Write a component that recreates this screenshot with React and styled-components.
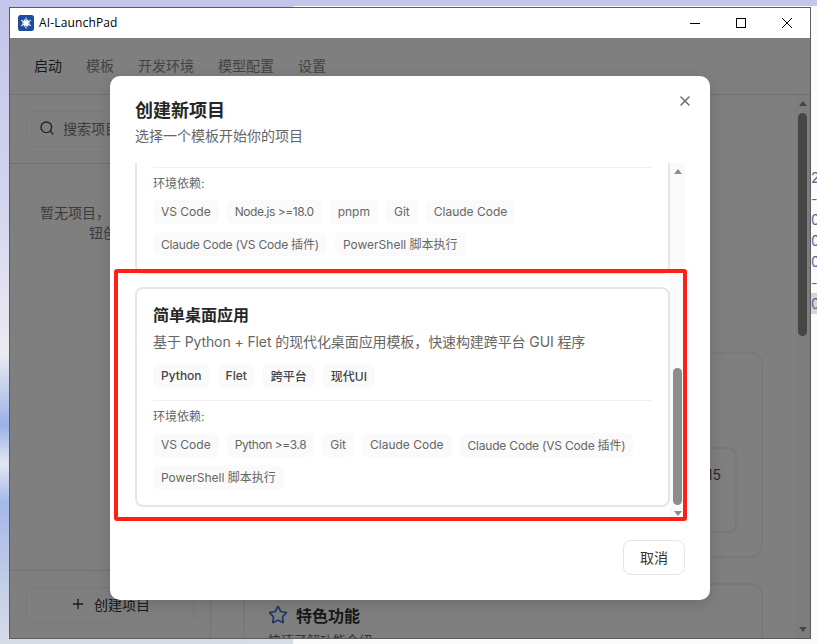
import React from 'react';
import styled, { createGlobalStyle } from 'styled-components';
import { Search, Plus, Star, X } from 'lucide-react';

const GlobalStyle = createGlobalStyle`
  html, body {
    margin: 0;
    height: 100%;
    overflow: hidden;
  }
  body {
    font-family: Inter, "Noto Sans CJK SC", sans-serif;
    color: #333;
  }
  * {
    box-sizing: border-box;
  }
`;

const Desktop = styled.div`
  position: relative;
  width: 817px;
  height: 644px;
  overflow: hidden;
  background: linear-gradient(180deg, #c3c6ea 0, #d2d3ee 30%, #ebebf2 55%, #9ab2e6 66%, #e3e6f2 72%, #a5b9e8 78%, #d8dce6 100%);
`;

const BackWindow = styled.div`
  position: absolute;
  left: 293px;
  top: 5px;
  right: 0;
  bottom: 0;
  padding: 161px 0 0 518px;
  background: #fbfbfb;
  border-top: 1px solid #c9c9c9;
`;

const BackRow = styled.div`
  height: 21px;
  line-height: 21px;
  font-size: 14px;
  color: #4a6a9a;
  white-space: nowrap;
  background: ${({ $active }) => ($active ? '#d4d4d4' : 'transparent')};
`;

const Window = styled.div`
  position: absolute;
  left: 9px;
  top: 7px;
  width: 802px;
  height: 632px;
  display: flex;
  flex-direction: column;
  overflow: hidden;
  background: #fff;
  border: 1px solid #5c5c5c;
`;

const TitleBar = styled.div`
  height: 30px;
  flex: none;
  display: flex;
  align-items: center;
  padding-left: 8px;
  background: #fff;
`;

const TitleText = styled.span`
  margin-left: 5px;
  padding-bottom: 2px;
  font-family: "Open Sans", sans-serif;
  font-size: 12px;
  letter-spacing: 0.15px;
  color: #000;
`;

const WindowControls = styled.div`
  margin-left: auto;
  display: flex;
`;

const ControlButton = styled.div`
  width: 46px;
  height: 30px;
  display: flex;
  align-items: center;
  justify-content: center;
`;

const AppBody = styled.div`
  position: relative;
  flex: 1;
  min-height: 0;
  display: flex;
  flex-direction: column;
`;

const Nav = styled.nav`
  height: 57px;
  flex: none;
  display: flex;
  align-items: center;
  gap: 24px;
  padding: 0 24px 2px;
  border-bottom: 1px solid #e5e5e5;
`;

const NavItem = styled.span`
  font-size: 14px;
  color: ${({ $active }) => ($active ? '#333' : '#888')};
`;

const Content = styled.div`
  flex: 1;
  min-height: 0;
  display: flex;
`;

const Sidebar = styled.aside`
  width: 201px;
  flex: none;
  display: flex;
  flex-direction: column;
  border-right: 1px solid #ebebeb;
`;

const SearchSection = styled.div`
  padding: 16px;
  border-bottom: 1px solid #e5e5e5;
`;

const SearchBox = styled.div`
  height: 36px;
  display: flex;
  align-items: center;
  gap: 8px;
  padding: 0 12px 2px;
  font-size: 14px;
  color: #777;
  border: 1px solid #f5f5f5;
  border-radius: 8px;
`;

const EmptyText = styled.p`
  flex: 1;
  margin: 0;
  padding: 39px 24px 0;
  font-size: 14px;
  line-height: 20px;
  text-align: center;
  color: #777;
`;

const SidebarFooter = styled.div`
  padding: 16px 16px 15px;
  border-top: 1px solid #e5e5e5;
`;

const CreateButton = styled.div`
  height: 36px;
  display: flex;
  align-items: center;
  justify-content: center;
  gap: 8px;
  padding-bottom: 2px;
  font-size: 14px;
  color: #333;
  border: 1px solid #f2f2f2;
  border-radius: 8px;
`;

const Main = styled.main`
  flex: 1;
  min-width: 0;
  display: flex;
  flex-direction: column;
  gap: 25px;
  padding: 257px 32px 0;
  overflow: hidden;
`;

const PanelCard = styled.section`
  flex: none;
  padding: 93px 24px 23px;
  border: 2px solid #f2f2f2;
  border-radius: 12px;
`;

const InfoBox = styled.div`
  height: 86px;
  display: flex;
  align-items: flex-start;
  justify-content: flex-end;
  padding: 17px 14px 0 0;
  font-size: 14px;
  color: #555;
  border: 2px solid #f2f2f2;
  border-radius: 8px;
`;

const FeatureCard = styled.section`
  flex: none;
  padding: 18px 23px;
  border: 2px solid #f2f2f2;
  border-radius: 12px;
`;

const FeatureHead = styled.div`
  display: flex;
  align-items: center;
  gap: 8px;
  height: 24px;
  font-size: 16px;
  font-weight: 600;
  color: #333;
`;

const FeatureDesc = styled.p`
  margin: 3px 0 0;
  font-size: 13px;
  color: #666;
`;

const ScrollTrack = styled.div`
  width: 15px;
  flex: none;
  display: flex;
  flex-direction: column;
  align-items: center;
  padding: ${({ $pad }) => $pad};
  background: #fafafa;
`;

const ArrowUp = styled.div`
  width: 0;
  height: 0;
  border-left: 4.5px solid transparent;
  border-right: 4.5px solid transparent;
  border-bottom: 5px solid #8c8c8c;
`;

const ArrowDown = styled(ArrowUp)`
  border-bottom: 0;
  border-top: 5px solid #8c8c8c;
`;

const Thumb = styled.div`
  width: 9px;
  height: ${({ $height }) => $height}px;
  margin: ${({ $end }) => ($end ? 'auto 0 6px' : '7px 0 auto')};
  background: #8c8c8c;
  border-radius: 5px;
`;

const Overlay = styled.div`
  position: absolute;
  inset: 0;
  display: flex;
  align-items: center;
  justify-content: center;
  background: rgba(0, 0, 0, 0.5);
`;

const Modal = styled.div`
  position: relative;
  width: 600px;
  height: 524px;
  display: flex;
  flex-direction: column;
  padding: 0 25px;
  background: #fff;
  border-radius: 10px;
  box-shadow: 0 4px 16px rgba(0, 0, 0, 0.15);
`;

const ModalHeader = styled.header`
  height: 87px;
  flex: none;
  padding-top: 24px;
`;

const ModalTitle = styled.h2`
  margin: 0;
  font-size: 18px;
  line-height: 22px;
  font-weight: 700;
  color: #262626;
`;

const ModalSubtitle = styled.p`
  margin: 4px 0 0;
  font-size: 14px;
  line-height: 20px;
  color: #666;
`;

const CloseButton = styled.div`
  position: absolute;
  top: 17px;
  right: 17px;
  display: flex;
  color: #666;
`;

const ListArea = styled.div`
  height: 357px;
  flex: none;
  display: flex;
`;

const TemplateList = styled.div`
  flex: 1;
  min-width: 0;
  display: flex;
  flex-direction: column;
  justify-content: flex-end;
  gap: 13px;
  padding-bottom: 13px;
  overflow: hidden;
`;

const TemplateCard = styled.article`
  flex: none;
  padding: 16px;
  border: 2px solid #e5e5e5;
  border-radius: 8px;
`;

const CardTitle = styled.h3`
  margin: 0;
  font-size: 16px;
  line-height: 20px;
  font-weight: 700;
  color: #262626;
`;

const CardDesc = styled.p`
  margin: 8px 0 13px;
  font-size: 14px;
  line-height: 18px;
  letter-spacing: -0.1px;
  color: #666;
`;

const ChipRow = styled.div`
  display: flex;
  flex-wrap: wrap;
  gap: 8px;
`;

const Chip = styled.span`
  height: 24px;
  display: inline-flex;
  align-items: center;
  padding: 0 8px 2px;
  font-size: 12px;
  font-weight: ${({ $strong }) => ($strong ? 500 : 400)};
  letter-spacing: ${({ $spacing }) => $spacing || 0}px;
  color: ${({ $strong }) => ($strong ? '#444' : '#666')};
  background: #fafafa;
  border-radius: 6px;
`;

const DepsSection = styled.div`
  margin-top: ${({ $flush }) => ($flush ? '0' : '12px')};
  padding-top: 8px;
  border-top: 1px solid #f0f0f0;
`;

const DepsLabel = styled.div`
  margin-bottom: 9px;
  font-size: 12px;
  line-height: 15px;
  color: #666;
`;

const ModalFooter = styled.footer`
  display: flex;
  justify-content: flex-end;
  padding-top: 20px;
`;

const CancelButton = styled.div`
  width: 62px;
  height: 35px;
  display: flex;
  align-items: center;
  justify-content: center;
  padding-bottom: 2px;
  font-size: 14px;
  color: #333;
  background: #fff;
  border: 1px solid #e5e5e5;
  border-radius: 8px;
`;

const Highlight = styled.div`
  position: absolute;
  left: 114px;
  top: 269px;
  width: 573px;
  height: 252px;
  border: 4px solid #ff2015;
  border-radius: 3px;
  pointer-events: none;
`;

const navItems = ['启动', '模板', '开发环境', '模型配置', '设置'];
const backRows = ['2', '-', '0', '0', '0', '-', '0'];
const firstDeps = ['VS Code', 'Node.js >=18.0', 'pnpm', 'Git', 'Claude Code', 'Claude Code (VS Code 插件)', 'PowerShell 脚本执行'];
const desktopTags = ['Python', 'Flet', '跨平台', '现代UI'];
const desktopDeps = ['VS Code', 'Python >=3.8', 'Git', 'Claude Code', 'Claude Code (VS Code 插件)', 'PowerShell 脚本执行'];

// the longer labels run a little narrow in the reference
const chipSpacing = (label) => {
  if (label.includes('>=')) return -0.45;
  if (label.includes('(')) return -0.2;
  return 0;
};

function AppLogo() {
  const rays = [0, 30, 60, 90, 120, 150, 180, 210, 240, 270, 300, 330];
  return (
    <svg width="16" height="16" viewBox="0 0 16 16">
      <rect width="16" height="16" rx="2.5" fill="#1d4c9c" />
      {rays.map((a) => (
        <line key={a} x1="8" y1="8" x2="8" y2={a % 60 === 0 ? 2.5 : 4} stroke="#fff" strokeWidth="1" transform={`rotate(${a} 8 8)`} />
      ))}
      <circle cx="8" cy="8" r="2.4" fill="#fff" />
    </svg>
  );
}

function MinimizeIcon() {
  return (
    <svg width="10" height="10" viewBox="0 0 10 10">
      <path d="M0 5.5h10" stroke="#000" strokeWidth="1" fill="none" />
    </svg>
  );
}

function MaximizeIcon() {
  return (
    <svg width="10" height="10" viewBox="0 0 10 10">
      <rect x="0.5" y="0.5" width="9" height="9" stroke="#000" strokeWidth="1" fill="none" />
    </svg>
  );
}

function CloseIcon() {
  return (
    <svg width="10" height="10" viewBox="0 0 10 10">
      <path d="M0 0l10 10M10 0L0 10" stroke="#000" strokeWidth="1" fill="none" />
    </svg>
  );
}

function Deps({ items, flush }) {
  return (
    <DepsSection $flush={flush}>
      <DepsLabel>环境依赖:</DepsLabel>
      <ChipRow>
        {items.map((d) => (
          <Chip key={d} $spacing={chipSpacing(d)}>{d}</Chip>
        ))}
      </ChipRow>
    </DepsSection>
  );
}

export default function App() {
  return (
    <Desktop>
      <GlobalStyle />
      <BackWindow>
        {backRows.map((r, i) => (
          <BackRow key={i} $active={i === 6}>{r}</BackRow>
        ))}
      </BackWindow>

      <Window>
        <TitleBar>
          <AppLogo />
          <TitleText>AI-LaunchPad</TitleText>
          <WindowControls>
            <ControlButton><MinimizeIcon /></ControlButton>
            <ControlButton><MaximizeIcon /></ControlButton>
            <ControlButton><CloseIcon /></ControlButton>
          </WindowControls>
        </TitleBar>

        <AppBody>
          <Nav>
            {navItems.map((n, i) => (
              <NavItem key={n} $active={i === 0}>{n}</NavItem>
            ))}
          </Nav>

          <Content>
            <Sidebar>
              <SearchSection>
                <SearchBox>
                  <Search size={16} color="#444" />
                  搜索项目...
                </SearchBox>
              </SearchSection>
              <EmptyText>暂无项目，点击下方按钮创建</EmptyText>
              <SidebarFooter>
                <CreateButton>
                  <Plus size={16} />
                  创建项目
                </CreateButton>
              </SidebarFooter>
            </Sidebar>

            <Main>
              <PanelCard>
                <InfoBox>15</InfoBox>
              </PanelCard>
              <FeatureCard>
                <FeatureHead>
                  <Star size={20} color="#3b6fd8" />
                  特色功能
                </FeatureHead>
                <FeatureDesc>快速了解功能介绍</FeatureDesc>
              </FeatureCard>
            </Main>

            <ScrollTrack $pad="6px 0 6px">
              <ArrowUp />
              <Thumb $height={223} />
              <ArrowDown />
            </ScrollTrack>
          </Content>

          <Overlay>
            <Modal>
              <CloseButton><X size={16} /></CloseButton>
              <ModalHeader>
                <ModalTitle>创建新项目</ModalTitle>
                <ModalSubtitle>选择一个模板开始你的项目</ModalSubtitle>
              </ModalHeader>

              <ListArea>
                <TemplateList>
                  <TemplateCard>
                    <Deps items={firstDeps} flush />
                  </TemplateCard>
                  <TemplateCard>
                    <CardTitle>简单桌面应用</CardTitle>
                    <CardDesc>基于 Python + Flet 的现代化桌面应用模板，快速构建跨平台 GUI 程序</CardDesc>
                    <ChipRow>
                      {desktopTags.map((t) => (
                        <Chip key={t} $strong>{t}</Chip>
                      ))}
                    </ChipRow>
                    <Deps items={desktopDeps} />
                  </TemplateCard>
                </TemplateList>
                <ScrollTrack $pad="6px 0 4px">
                  <ArrowUp />
                  <Thumb $height={137} $end />
                  <ArrowDown />
                </ScrollTrack>
              </ListArea>

              <ModalFooter>
                <CancelButton>取消</CancelButton>
              </ModalFooter>
            </Modal>
          </Overlay>
        </AppBody>
      </Window>

      <Highlight />
    </Desktop>
  );
}
